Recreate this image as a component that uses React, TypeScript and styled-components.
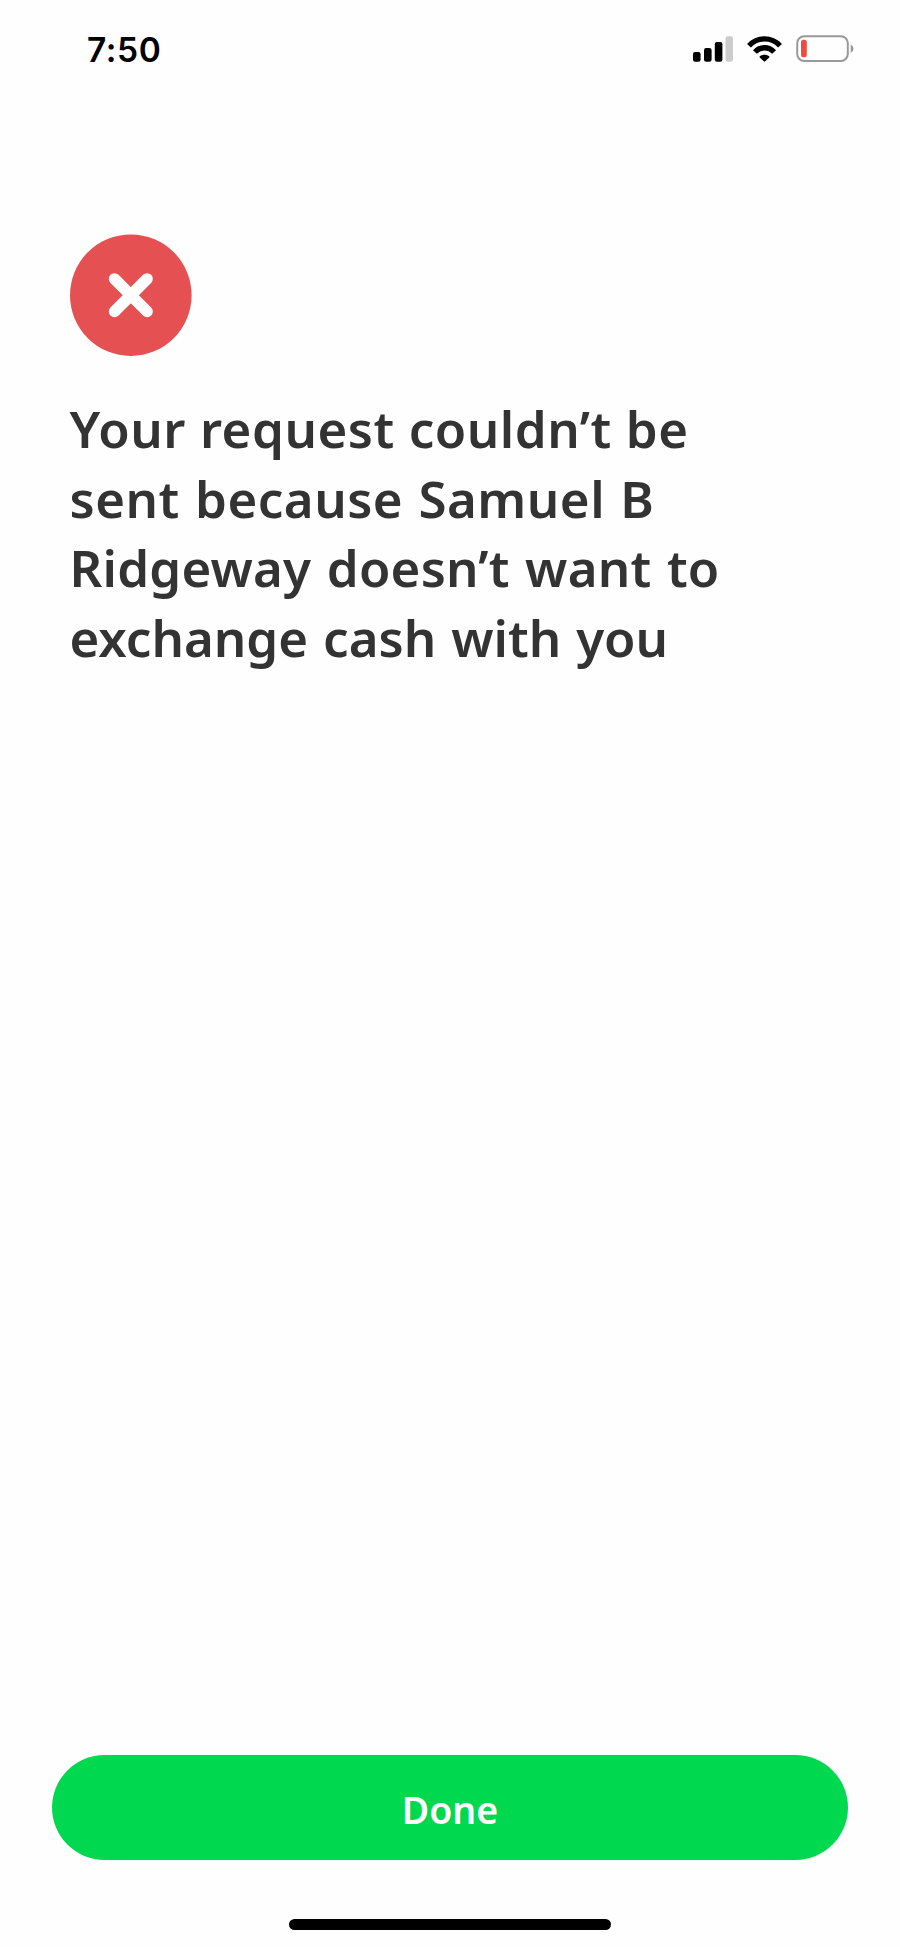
import React from "react";
import styled, { createGlobalStyle } from "styled-components";

const GlobalStyle = createGlobalStyle`
  * { box-sizing: border-box; }
  body { margin: 0; background: #fefefe; }
`;

const Screen = styled.div`
  display: flex;
  flex-direction: column;
  width: 900px;
  height: 1947px;
  background: #fefefe;
  overflow: hidden;
`;

const StatusBar = styled.header`
  display: flex;
  align-items: center;
  justify-content: space-between;
  height: 98px;
  padding: 0 46px 0 87px;
`;

const Time = styled.time`
  padding-top: 1px;
  font: 600 33.5px/40px Inter, sans-serif;
  letter-spacing: 0.6px;
  color: #000;
`;

const StatusIcons = styled.div`
  display: flex;
  align-items: center;
  gap: 14px;

  svg { display: block; }
`;

const Content = styled.main`
  flex: 1;
  padding: 136px 70px 0 69.5px;
`;

const ErrorBadge = styled.svg`
  display: block;
  width: 122px;
  height: 123px;
`;

const Message = styled.h1`
  margin: 37px 0 0;
  font: 600 51px/69.7px "Noto Sans", sans-serif;
  color: #333;
`;

const Line = styled.span<{ $letter: number; $word: number }>`
  display: block;
  width: max-content;
  letter-spacing: ${({ $letter }) => $letter}px;
  word-spacing: ${({ $word }) => $word}px;
`;

const Footer = styled.footer`
  display: flex;
  flex-direction: column;
  align-items: center;
  gap: 59px;
  padding: 0 52px 17px;
`;

const DoneButton = styled.button`
  width: 100%;
  height: 105px;
  padding: 5px 0 0;
  border: 0;
  border-radius: 53px;
  background: #00d94f;
  color: #fff;
  font: 600 37.5px/50px "Noto Sans", sans-serif;
`;

const HomeIndicator = styled.div`
  width: 322px;
  height: 11px;
  border-radius: 6px;
  background: #000;
`;

const SignalIcon = () => (
  <svg width="40" height="26" viewBox="0 0 40 26">
    <rect x="0" y="16" width="7.6" height="9.7" rx="2.2" />
    <rect x="11" y="12" width="7.6" height="13.7" rx="2.2" />
    <rect x="21.8" y="6" width="7.6" height="19.7" rx="2.2" />
    <rect x="32.6" y="0.2" width="7.4" height="25.5" rx="2.2" fill="#ccc" />
  </svg>
);

const WifiIcon = () => (
  <svg width="35" height="26" viewBox="0 0 35 26">
    <g fill="none" stroke="#000" strokeWidth="5.3">
      <path d="M2 9.7C10.5 .6 24.5 .6 33 9.7" />
      <path d="M7.9 16C13.2 10.3 21.8 10.3 27.1 16" />
    </g>
    <path d="M12.6 20.4C15.4 18.2 19.6 18.2 22.4 20.4Q22.7 20.9 22.2 21.4L18.2 25.3Q17.5 26 16.8 25.3L12.8 21.4Q12.3 20.9 12.6 20.4Z" />
  </svg>
);

const BatteryIcon = () => (
  <svg width="58" height="28" viewBox="0 0 58 28">
    <rect x="1.2" y="1.2" width="50.6" height="24.8" rx="7" fill="none" stroke="#999" strokeWidth="2" />
    <rect x="5" y="4.8" width="5.8" height="17.5" rx="2.5" fill="#ee4b3e" />
    <path d="M54.7 9.5Q57.5 10.8 57.5 13.8T54.7 18.1Z" fill="#999" />
  </svg>
);

const ErrorIcon = () => (
  <ErrorBadge viewBox="0 0 122 123" fill="none">
    <circle cx="60.8" cy="61.2" r="60.8" fill="#e55152" />
    <path d="M44.5 44.9 77.1 77.5M77.1 44.9 44.5 77.5" stroke="#fff" strokeWidth="11.4" strokeLinecap="round" />
  </ErrorBadge>
);

const messageLines = [
  { text: "Your request couldn’t be", letter: 0.5, word: 0.4 },
  { text: "sent because Samuel B", letter: 0.5, word: 1.5 },
  { text: "Ridgeway doesn’t want to", letter: 0.22, word: 2 },
  { text: "exchange cash with you", letter: 0, word: 1.7 },
];

export default function App() {
  return (
    <Screen>
      <GlobalStyle />
      <StatusBar>
        <Time>7:50</Time>
        <StatusIcons>
          <SignalIcon />
          <WifiIcon />
          <BatteryIcon />
        </StatusIcons>
      </StatusBar>
      <Content>
        <ErrorIcon />
        <Message>
          {messageLines.map(({ text, letter, word }) => (
            <Line key={text} $letter={letter} $word={word}>{text} </Line>
          ))}
        </Message>
      </Content>
      <Footer>
        <DoneButton type="button">Done</DoneButton>
        <HomeIndicator />
      </Footer>
    </Screen>
  );
}
